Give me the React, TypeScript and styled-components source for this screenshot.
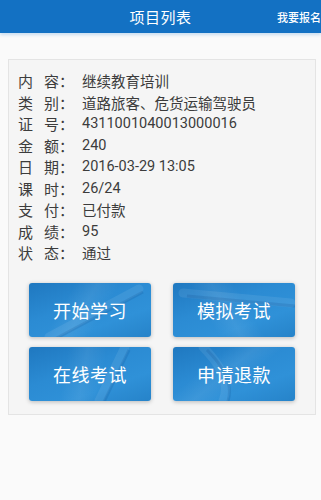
import React from "react";
import styled, { createGlobalStyle } from "styled-components";

const GlobalStyle = createGlobalStyle`
  body {
    margin: 0;
    background: #fafafa;
    font-family: Roboto, "Noto Sans CJK SC", "Noto Sans", sans-serif;
  }
`;

const Page = styled.div`
  width: 321px;
  min-height: 500px;
  background: #fafafa;
`;

const Header = styled.header`
  height: 33px;
  background: #1371c3;
  box-shadow: 0 2px 3px rgba(60, 140, 210, 0.25);
  display: grid;
  grid-template-columns: 1fr auto 1fr;
  align-items: center;
  color: #fff;
`;

const Title = styled.h1`
  grid-column: 2;
  margin: 0;
  font-size: 15px;
  font-weight: 400;
  letter-spacing: 0.5px;
`;

const HeaderLink = styled.a`
  grid-column: 3;
  justify-self: end;
  font-size: 11px;
  font-weight: 500;
  cursor: pointer;
`;

const Card = styled.section`
  margin: 26px 5px 0 8px;
  background: #f5f5f5;
  border: 1px solid #e4e4e4;
  padding: 10px 0 13px 9px;
`;

const InfoList = styled.dl`
  margin: 0;
`;

const Row = styled.div`
  display: flex;
  align-items: center;
  height: 21.5px;
  font-size: 15px;
  color: #3c3c3c;
`;

const Label = styled.dt`
  width: 41px;
  text-align: justify;
  text-align-last: justify;
`;

const Colon = styled.span`
  width: 23px;
`;

const Value = styled.dd`
  margin: 0;
  white-space: nowrap;
  font-size: 14.5px;
`;

const Actions = styled.div`
  display: grid;
  grid-template-columns: 122px 122px;
  column-gap: 22px;
  row-gap: 10px;
  justify-content: center;
  margin: 19px 9px 0 0;
`;

const ActionButton = styled.button<{ $angle: number }>`
  position: relative;
  overflow: hidden;
  height: 54px;
  border: none;
  border-radius: 3px;
  background:
    linear-gradient(${(p) => p.$angle}deg, rgba(255, 255, 255, 0) 30%, rgba(255, 255, 255, 0.07) 45%, rgba(255, 255, 255, 0) 60%),
    linear-gradient(160deg, #1f78c0 0%, #2b8bd3 40%, #2f91d8 70%, #2683c9 100%);
  box-shadow: 0 1px 4px rgba(0, 0, 0, 0.25);
  color: #fff;
  font-family: inherit;
  font-size: 18px;
  cursor: pointer;
`;

const Decor = styled.svg`
  position: absolute;
  inset: 0;
  width: 100%;
  height: 100%;
  pointer-events: none;
`;

const ButtonText = styled.span`
  position: relative;
  letter-spacing: 0.5px;
`;

const rows: [string, string][] = [
  ["内容", "继续教育培训"],
  ["类别", "道路旅客、危货运输驾驶员"],
  ["证号", "4311001040013000016"],
  ["金额", "240"],
  ["日期", "2016-03-29 13:05"],
  ["课时", "26/24"],
  ["支付", "已付款"],
  ["成绩", "95"],
  ["状态", "通过"],
];

const actions = [
  { text: "开始学习", angle: 120, pen: "M20 54 L110 6" },
  { text: "模拟考试", angle: 60, pen: "M10 10 L118 20" },
  { text: "在线考试", angle: 100, pen: "M70 54 L96 0" },
  { text: "申请退款", angle: 140, pen: "M30 0 Q60 30 50 54" },
];

export default function App() {
  return (
    <Page>
      <GlobalStyle />
      <Header>
        <Title>项目列表</Title>
        <HeaderLink>我要报名</HeaderLink>
      </Header>
      <Card>
        <InfoList>
          {rows.map(([k, v]) => (
            <Row key={k}>
              <Label>{k}</Label>
              <Colon>：</Colon>
              <Value>{v}</Value>
            </Row>
          ))}
        </InfoList>
        <Actions>
          {actions.map((a) => (
            <ActionButton key={a.text} $angle={a.angle}>
              <Decor viewBox="0 0 122 54" preserveAspectRatio="none">
                <path d={a.pen} stroke="rgba(255,255,255,0.08)" strokeWidth="9" fill="none" strokeLinecap="round" />
                <path d={a.pen} stroke="rgba(10,60,120,0.14)" strokeWidth="3" fill="none" transform="translate(4 3)" />
              </Decor>
              <ButtonText>{a.text}</ButtonText>
            </ActionButton>
          ))}
        </Actions>
      </Card>
    </Page>
  );
}
